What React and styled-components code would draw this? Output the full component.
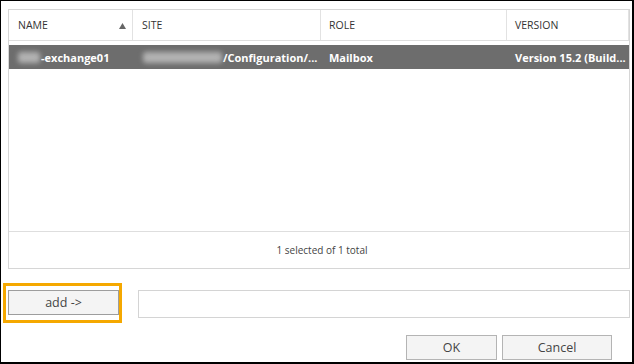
import React from 'react';
import styled, { createGlobalStyle } from 'styled-components';

const GlobalStyle = createGlobalStyle`
  html, body {
    margin: 0;
    padding: 0;
    background: #fff;
  }
  body {
    font-family: "Open Sans", "Noto Sans", "Liberation Sans", sans-serif;
    color: #333;
  }
`;

const Frame = styled.div`
  width: 634px;
  height: 364px;
  box-sizing: border-box;
  border: 1px solid #000;
  border-right-width: 2px;
  border-bottom-width: 2px;
  padding: 8px 2px 0 2px;
  display: flex;
  flex-direction: column;
  overflow: hidden;
`;

const Grid = styled.div`
  margin-left: 5px;
  width: 622px;
  height: 260px;
  box-sizing: border-box;
  border: 1px solid #d6d6d6;
  display: flex;
  flex-direction: column;
`;

const Columns = styled.div`
  display: grid;
  grid-template-columns: 124px 188px 186px 1fr;
`;

const HeaderRow = styled(Columns)`
  height: 30px;
  border-bottom: 1px solid #dedede;
`;

const HeaderCell = styled.div`
  position: relative;
  display: flex;
  align-items: center;
  padding-left: ${p => p.$pad || 8}px;
  font-size: 10.5px;
  color: #333;
  text-transform: uppercase;
  border-right: 1px solid #e2e2e2;
`;

const SortArrow = styled.svg`
  position: absolute;
  right: 6px;
  top: 13px;
`;

const Body = styled.div`
  flex: 1;
  padding-top: 4px;
`;

const Row = styled(Columns)`
  height: 24px;
  background: ${p => (p.$selected ? '#6d6d6d' : 'transparent')};
  color: ${p => (p.$selected ? '#fff' : '#333')};
`;

const Cell = styled.div`
  display: flex;
  align-items: center;
  padding-left: ${p => p.$pad || 8}px;
  font-size: 11px;
  font-weight: 700;
  white-space: nowrap;
`;

/* redacted part of a value: a soft grey smear */
const Blur = styled.span`
  display: inline-block;
  width: ${p => p.$w}px;
  height: 11px;
  margin-right: 1px;
  background: rgba(195, 195, 195, 0.8);
  border-radius: 3px;
  filter: blur(2.5px);
`;

const Footer = styled.div`
  height: 36px;
  border-top: 1px solid #dedede;
  display: flex;
  align-items: center;
  justify-content: center;
  padding-left: 6px;
  font-size: 10px;
  color: #444;
`;

const AddRow = styled.div`
  display: flex;
  align-items: flex-start;
  margin-top: 14px;
  gap: 16px;
`;

const Highlight = styled.div`
  border: 3px solid #f5a800;
  padding: 4px 0 5px 2px;
`;

const Button = styled.button`
  width: ${p => p.$w}px;
  height: 25px;
  box-sizing: border-box;
  border: 1px solid ${p => (p.$dark ? '#9d9d9d' : '#b4b4b4')};
  background: #f4f4f4;
  color: #444;
  font-family: inherit;
  font-size: 12.5px;
  padding: 0;
`;

const TextBox = styled.div`
  flex: 1;
  margin-top: 7px;
  height: 28px;
  box-sizing: border-box;
  border: 1px solid #d4d4d4;
  background: #fff;
`;

const Actions = styled.div`
  display: flex;
  justify-content: flex-end;
  gap: 5px;
  margin-top: 12px;
  padding-right: 18px;
`;

export default function App() {
  return (
    <>
      <GlobalStyle />
      <Frame>
        <Grid>
          <HeaderRow>
            <HeaderCell $pad={9}>
              Name
              <SortArrow width="7" height="6" viewBox="0 0 7 6">
                <polygon points="3.5,0 7,6 0,6" fill="#666" />
              </SortArrow>
            </HeaderCell>
            <HeaderCell $pad={9}>Site</HeaderCell>
            <HeaderCell>Role</HeaderCell>
            <HeaderCell>Version</HeaderCell>
          </HeaderRow>
          <Body>
            <Row $selected>
              <Cell $pad={9}>
                <Blur $w={22} />-exchange01
              </Cell>
              <Cell $pad={10}>
                <Blur $w={79} />/Configuration/...
              </Cell>
              <Cell>Mailbox</Cell>
              <Cell>Version 15.2 (Build...</Cell>
            </Row>
          </Body>
          <Footer>1 selected of 1 total</Footer>
        </Grid>
        <AddRow>
          <Highlight>
            <Button $w={111} $dark>add -&gt;</Button>
          </Highlight>
          <TextBox />
        </AddRow>
        <Actions>
          <Button $w={91}>OK</Button>
          <Button $w={110}>Cancel</Button>
        </Actions>
      </Frame>
    </>
  );
}
